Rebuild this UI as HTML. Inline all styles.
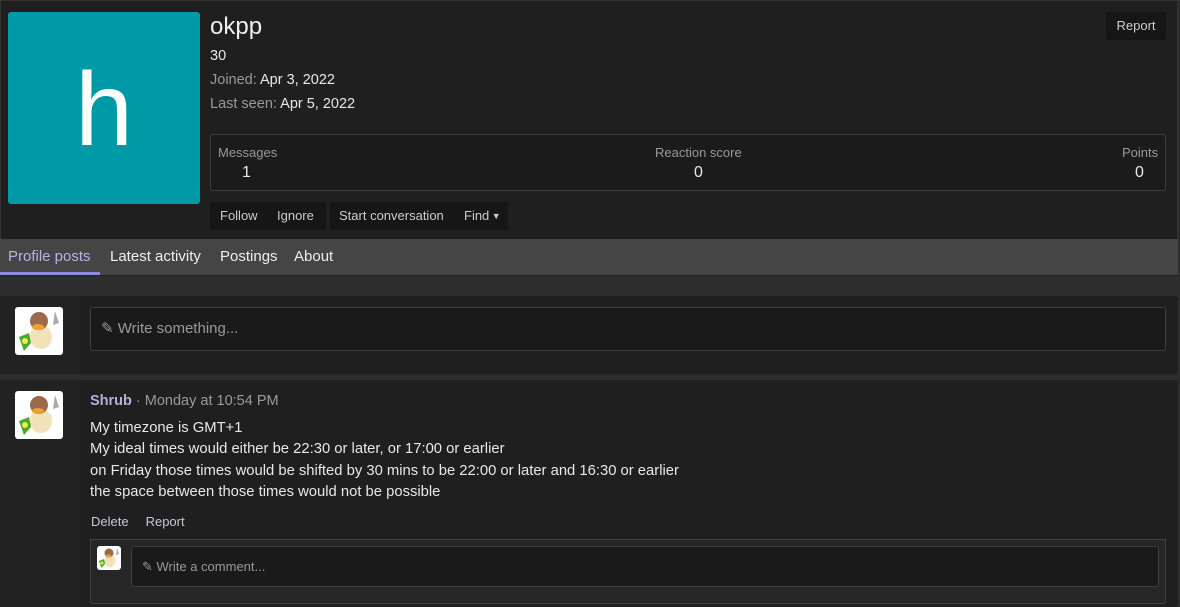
<!DOCTYPE html>
<html><head><meta charset="utf-8"><style>
*{box-sizing:border-box;margin:0;padding:0}
body{width:1180px;height:607px;background:#2d2d2d;font-family:"Liberation Sans","DejaVu Sans",sans-serif;color:#e8e8e8;position:relative;overflow:hidden;font-size:14px}
.abs{position:absolute}
.hdr{left:0;top:0;width:1178px;height:276px;background:#1f1f1f;border:1px solid #333;border-radius:0 0 3px 3px}
.av{left:8px;top:12px;width:192px;height:192px;background:#0099a8;border-radius:3px;color:#fff;font-size:104px;text-align:center;line-height:196px}
.name{left:210px;top:13px;font-size:24px;color:#eee}
.muted{color:#999}
.stats{left:210px;top:134px;width:956px;height:57px;border:1px solid #3e3e3e;border-radius:3px;background:#1b1b1b}
.btn{background:#161616;border-radius:3px;height:28px;font-size:13px;line-height:28px;color:#ccc}
.tabs{left:0;top:239px;width:1178px;height:37px;background:#454545;border-bottom:1px solid #222}
.tab{position:absolute;top:9px;font-size:15px;color:#eee}
.blk{left:0;width:1178px;background:#1f1f1f;border-radius:3px}
.lc{left:0;top:0;width:80px;height:100%;background:#222}
.bird{width:48px;height:48px;background:#fff;border-radius:3px;overflow:hidden}
.inp{background:#1a1a1a;border:1px solid #3e3e3e;border-radius:3px;color:#999}
</style></head><body>
<div class="abs hdr"></div>
<div class="abs av">h</div>
<div class="abs name">okpp</div>
<div class="abs" style="left:210px;top:48px;font-size:14.5px">30</div>
<div class="abs" style="left:210px;top:72px;font-size:14.5px"><span class="muted">Joined:</span> Apr 3, 2022</div>
<div class="abs" style="left:210px;top:96px;font-size:14.5px"><span class="muted">Last seen:</span> Apr 5, 2022</div>
<div class="abs btn" style="left:1106px;top:12px;width:60px;text-align:center">Report</div>
<div class="abs stats"></div>
<div class="abs muted" style="left:218px;top:145px;font-size:13px">Messages</div>
<div class="abs" style="left:242px;top:164px;font-size:16px">1</div>
<div class="abs muted" style="left:655px;top:145px;font-size:13px">Reaction score</div>
<div class="abs" style="left:694px;top:164px;font-size:16px">0</div>
<div class="abs muted" style="left:1122px;top:145px;font-size:13px">Points</div>
<div class="abs" style="left:1135px;top:164px;font-size:16px">0</div>
<div class="abs btn" style="left:210px;top:202px;width:116px"><span style="position:absolute;left:10px">Follow</span><span style="position:absolute;left:67px">Ignore</span></div>
<div class="abs btn" style="left:330px;top:202px;width:178px"><span style="position:absolute;left:9px">Start conversation</span><span style="position:absolute;left:134px">Find<span style="font-size:9px;vertical-align:1px"> ▼</span></span></div>
<div class="abs tabs">
<div class="tab" style="left:8px;color:#b7b3e6">Profile posts</div>
<div class="abs" style="left:0;top:33px;width:100px;height:3px;background:#8f8adb"></div>
<div class="tab" style="left:110px">Latest activity</div>
<div class="tab" style="left:220px">Postings</div>
<div class="tab" style="left:294px">About</div>
</div>
<div class="abs blk" style="top:296px;height:78px"><div class="abs lc"></div>
<div class="abs bird" style="left:15px;top:11px"><svg width="48" height="48"><ellipse cx="26" cy="30" rx="11" ry="12" fill="#f2e2b8"/><circle cx="24" cy="14" r="9" fill="#9a6a4a"/><ellipse cx="23" cy="20" rx="6" ry="3" fill="#f0a030"/><path d="M4 30 L14 26 L16 36 L9 44 Z" fill="#4aa82e"/><circle cx="10" cy="34" r="3" fill="#ee4"/><path d="M40 4 L44 16 L38 18 Z" fill="#aaa"/></svg></div>
<div class="abs inp" style="left:90px;top:11px;width:1076px;height:44px;font-size:15px;line-height:42px;padding-left:10px">✎ Write something...</div>
</div>
<div class="abs blk" style="top:380px;height:227px"><div class="abs lc"></div>
<div class="abs bird" style="left:15px;top:11px"><svg width="48" height="48"><ellipse cx="26" cy="30" rx="11" ry="12" fill="#f2e2b8"/><circle cx="24" cy="14" r="9" fill="#9a6a4a"/><ellipse cx="23" cy="20" rx="6" ry="3" fill="#f0a030"/><path d="M4 30 L14 26 L16 36 L9 44 Z" fill="#4aa82e"/><circle cx="10" cy="34" r="3" fill="#ee4"/><path d="M40 4 L44 16 L38 18 Z" fill="#aaa"/></svg></div>
<div class="abs" style="left:90px;top:13px;font-size:14.5px"><b style="color:#b3b0dc">Shrub</b> <span class="muted">· Monday at 10:54 PM</span></div>
<div class="abs" style="left:90px;top:38px;font-size:14.8px;line-height:21.3px">My timezone is GMT+1<br>My ideal times would either be 22:30 or later, or 17:00 or earlier<br>on Friday those times would be shifted by 30 mins to be 22:00 or later and 16:30 or earlier<br>the space between those times would not be possible</div>
<div class="abs" style="left:91px;top:134px;font-size:13px;color:#c8c8d8">Delete<span style="margin-left:17px">Report</span></div>
<div class="abs" style="left:90px;top:159px;width:1076px;height:65px;background:#262626;border:1px solid #404040"></div>
<div class="abs bird" style="left:97px;top:166px;width:24px;height:24px"><svg width="24" height="24" viewBox="0 0 48 48"><ellipse cx="26" cy="30" rx="11" ry="12" fill="#f2e2b8"/><circle cx="24" cy="14" r="9" fill="#9a6a4a"/><ellipse cx="23" cy="20" rx="6" ry="3" fill="#f0a030"/><path d="M4 30 L14 26 L16 36 L9 44 Z" fill="#4aa82e"/><circle cx="10" cy="34" r="3" fill="#ee4"/><path d="M40 4 L44 16 L38 18 Z" fill="#aaa"/></svg></div>
<div class="abs inp" style="left:131px;top:166px;width:1028px;height:41px;font-size:13px;line-height:40px;padding-left:10px">✎ Write a comment...</div>
</div>
</body></html>
